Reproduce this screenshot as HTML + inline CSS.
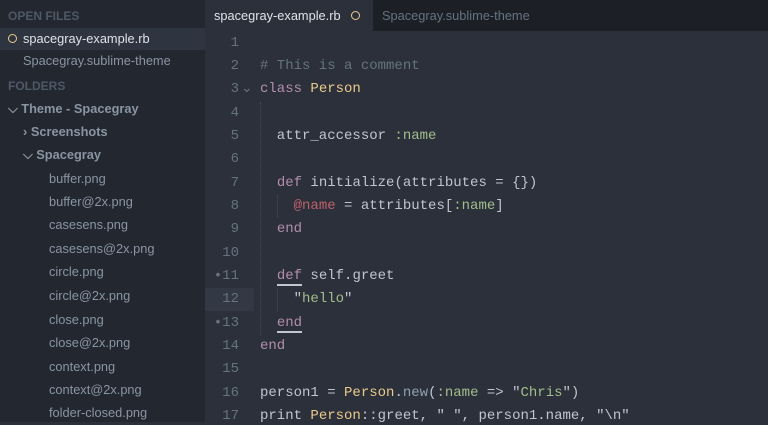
<!DOCTYPE html>
<html><head><style>
*{margin:0;padding:0}
body{width:768px;height:422px;overflow:hidden;background:#2b303b;position:relative;font-family:"Liberation Sans",sans-serif}
#sb{position:absolute;left:0;top:0;width:205px;height:422px;background:#232830}
.s{position:absolute;font-size:12.8px;color:#8a94a3;white-space:nowrap;line-height:16px}
.h{color:#4f5867;font-weight:bold;font-size:12px}
.b{font-weight:bold;color:#8a94a3}
#tabs{position:absolute;left:205px;top:0;width:563px;height:31px;background:#1c1f26}
.t{position:absolute;top:8px;font-size:12.8px;white-space:nowrap}
.ln{position:absolute;left:205px;width:34px;text-align:right;font-family:"Liberation Mono",monospace;font-size:14px;color:#65737e;line-height:18px}
.c{position:absolute;left:260px;font-family:"Liberation Mono",monospace;font-size:14px;color:#c0c5ce;white-space:pre;line-height:18px}
.k{color:#b48ead}.y{color:#ebcb8b}.g{color:#a3be8c}.cm{color:#65737e}.r{color:#bf616a}.bl{color:#8fa1b3}
.u{border-bottom:2px solid #c0c5ce}
.gd{position:absolute;width:0;border-left:1px dotted #454c59}
</style></head><body>
<div id="sb">
<div style="position:absolute;left:0;top:28px;width:205px;height:22px;background:#2f3540"></div>
<div class="s h" style="left:8px;top:8px">OPEN FILES</div>
<div class="s" style="left:8px;top:31px;color:#dfe3e8"><span style="display:inline-block;width:7px;height:7px;border:1.5px solid #ebcb8b;border-radius:50%;margin-right:6px;vertical-align:0"></span>spacegray-example.rb</div>
<div class="s" style="left:23px;top:53px">Spacegray.sublime-theme</div>
<div class="s h" style="left:8px;top:78px">FOLDERS</div>
<div class="s b" style="left:8px;top:101px">⌵ Theme - Spacegray</div>
<div class="s b" style="left:23px;top:124px">› Screenshots</div>
<div class="s b" style="left:23px;top:147px">⌵ Spacegray</div>
<div class="s" style="left:49px;top:171px">buffer.png</div>
<div class="s" style="left:49px;top:194px">buffer@2x.png</div>
<div class="s" style="left:49px;top:217px">casesens.png</div>
<div class="s" style="left:49px;top:241px">casesens@2x.png</div>
<div class="s" style="left:49px;top:264px">circle.png</div>
<div class="s" style="left:49px;top:288px">circle@2x.png</div>
<div class="s" style="left:49px;top:312px">close.png</div>
<div class="s" style="left:49px;top:335px">close@2x.png</div>
<div class="s" style="left:49px;top:359px">context.png</div>
<div class="s" style="left:49px;top:382px">context@2x.png</div>
<div class="s" style="left:49px;top:405px">folder-closed.png</div>
</div>
<div id="tabs">
<div style="position:absolute;left:0;top:0;width:168px;height:31px;background:#2b303b"></div>
<div class="t" style="left:9px;color:#dfe3e8">spacegray-example.rb <span style="display:inline-block;width:7px;height:7px;border:1.5px solid #ebcb8b;border-radius:50%;margin-left:7px"></span></div>
<div class="t" style="left:177px;color:#65737e">Spacegray.sublime-theme</div>
</div>
<div style="position:absolute;left:205px;top:288px;width:49px;height:23px;background:#323844"></div>
<div class="gd" style="left:260px;top:102px;height:234px"></div>
<div class="gd" style="left:277px;top:195px;height:22px"></div>
<div class="gd" style="left:277px;top:288px;height:23px"></div>
<div class="ln" style="top:34px">1</div>
<div class="ln" style="top:57px">2</div>
<div class="ln" style="top:80px">3<span style="position:absolute;left:36px">⌄</span></div>
<div class="ln" style="top:104px">4</div>
<div class="ln" style="top:127px">5</div>
<div class="ln" style="top:150px">6</div>
<div class="ln" style="top:174px">7</div>
<div class="ln" style="top:197px">8</div>
<div class="ln" style="top:220px">9</div>
<div class="ln" style="top:244px">10</div>
<div class="ln" style="top:267px">•11</div>
<div class="ln" style="top:290px">12</div>
<div class="ln" style="top:314px">•13</div>
<div class="ln" style="top:337px">14</div>
<div class="ln" style="top:360px">15</div>
<div class="ln" style="top:384px">16</div>
<div class="ln" style="top:407px">17</div>
<div class="c cm" style="top:57px"># This is a comment</div>
<div class="c" style="top:80px"><span class="k">class</span> <span class="y">Person</span></div>
<div class="c" style="top:127px">  attr_accessor <span class="g">:name</span></div>
<div class="c" style="top:174px">  <span class="k">def</span> initialize(attributes = {})</div>
<div class="c" style="top:197px">    <span class="r">@name</span> = attributes[<span class="g">:name</span>]</div>
<div class="c" style="top:220px">  <span class="k">end</span></div>
<div class="c" style="top:267px">  <span class="k u">def</span> self.greet</div>
<div class="c" style="top:290px">    "<span class="g">hello</span>"</div>
<div class="c" style="top:314px">  <span class="k u">end</span></div>
<div class="c k" style="top:337px">end</div>
<div class="c" style="top:384px">person1 = <span class="y">Person</span>.<span class="bl">new</span>(<span class="g">:name</span> =&gt; "<span class="g">Chris</span>")</div>
<div class="c" style="top:407px">print <span class="y">Person</span>::greet, " ", person1.name, "\n"</div>
</body></html>
